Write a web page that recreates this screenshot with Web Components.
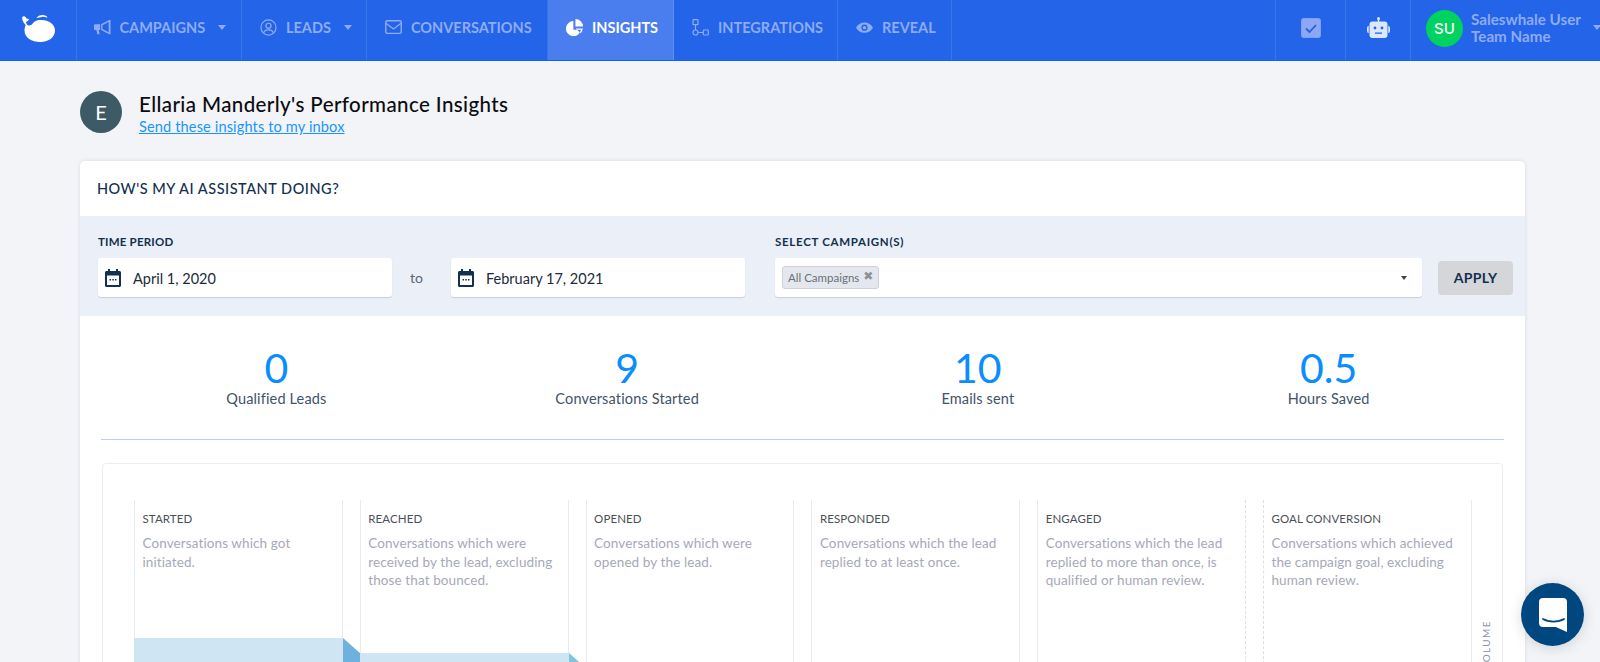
<!DOCTYPE html>
<html lang="en">
<head>
<meta charset="utf-8">
<title>Insights</title>
<style>
  html, body { margin: 0; height: 662px; overflow: hidden; }
  body { background: #f2f4f7; font-family: Lato, "Liberation Sans", sans-serif; color: #12304f; }
</style>
</head>
<body>
<sw-navbar>
  <nav-item style="width:165px;padding-left:16.5px" label="CAMPAIGNS" caret><svg viewBox="0 0 18 16"><path fill="currentColor" fill-rule="evenodd" d="M1 4.500h5.500v6h-1.500l1 4.500h-2.500l-1-4.500h-1.500a1 1 0 0 1-1-1v-4a1 1 0 0 1 1-1zM7.500 4.500l8.500-4.500h1.500v15h-1.500l-8.500-4.500zM9 5.500v4l6.500 3.500v-11z"/></svg></nav-item>
  <nav-item style="width:125px" label="LEADS" caret><svg viewBox="0 0 18 18" fill="none" stroke="currentColor" stroke-width="1.300"><circle cx="9" cy="9" r="8"/><circle cx="9" cy="7.200" r="2.700"/><path d="M3.900 14.600c.6-2 2.600-3.100 5.100-3.100s4.500 1.100 5.100 3.100"/></svg></nav-item>
  <nav-item style="width:181px" label="CONVERSATIONS"><svg viewBox="0 0 18 15" fill="none" stroke="currentColor" stroke-width="1.500"><rect x=".8" y=".8" width="16.400" height="13.400" rx="1.500"/><path d="M1 3.500l8 6 8-6"/></svg></nav-item>
  <nav-item style="width:126px" label="INSIGHTS" active><svg viewBox="0 0 18 18"><path fill="currentColor" d="M7.800 2.200a8 8 0 1 0 8 9.300h-8zM10 0a8 8 0 0 1 8 8h-8zM10.200 10h7.500a8 8 0 0 1-2.100 5.100z"/></svg></nav-item>
  <nav-item style="width:164px" label="INTEGRATIONS"><svg viewBox="0 0 17 17" fill="none" stroke="currentColor" stroke-width="1.200"><rect x="1" y=".7" width="5" height="5" rx=".8"/><path d="M3.500 5.700v5.300M6.300 13.500h5"/><circle cx="3.500" cy="13.500" r="2.500"/><rect x="11.300" y="11" width="5" height="5" rx=".8"/></svg></nav-item>
  <nav-item style="width:114px" label="REVEAL"><svg viewBox="0 0 18 12"><path fill="currentColor" fill-rule="evenodd" d="M9 .5c3.900 0 7.200 2.200 9 5.500-1.800 3.300-5.100 5.500-9 5.500s-7.200-2.200-9-5.500c1.800-3.300 5.100-5.500 9-5.500zm0 2.200a3.300 3.300 0 1 0 0 6.600 3.300 3.300 0 0 0 0-6.600zm0 1.500a1.800 1.800 0 1 1 0 3.600 1.800 1.800 0 0 1 0-3.600z"/></svg></nav-item>
</sw-navbar>

<insights-header name="Ellaria Manderly's Performance Insights" link="Send these insights to my inbox" initial="E"></insights-header>

<insights-card heading="HOW'S MY AI ASSISTANT DOING?">
  <filter-bar></filter-bar>
  <stat-row>
    <stat-item value="0" label="Qualified Leads"></stat-item>
    <stat-item value="9" label="Conversations Started"></stat-item>
    <stat-item value="10" label="Emails sent"></stat-item>
    <stat-item value="0.5" label="Hours Saved"></stat-item>
  </stat-row>
  <funnel-panel>
    <funnel-col title="STARTED" desc="Conversations which got initiated." fill="138" link="#6eb1de"></funnel-col>
    <funnel-col title="REACHED" desc="Conversations which were received by the lead, excluding those that bounced." fill="153" link="#7cc4e0"></funnel-col>
    <funnel-col title="OPENED" desc="Conversations which were opened by the lead."></funnel-col>
    <funnel-col title="RESPONDED" desc="Conversations which the lead replied to at least once."></funnel-col>
    <funnel-col title="ENGAGED" desc="Conversations which the lead replied to more than once, is qualified or human review." dashed="right"></funnel-col>
    <funnel-col title="GOAL CONVERSION" desc="Conversations which achieved the campaign goal, excluding human review." dashed="left"></funnel-col>
  </funnel-panel>
</insights-card>

<chat-launcher></chat-launcher>

<script>
const navItemTemplate = document.createElement("template");
navItemTemplate.innerHTML = /*html*/ `
<style>
  :host {
    display: flex;
    align-items: center;
    box-sizing: border-box;
    height: 60px;
    padding: 0 0 5px 18px;
    border-right: 1px solid #3a74ea;
    color: #8eabf5;
    font: 700 14.5px Lato, "Liberation Sans", sans-serif;
  }
  :host([active]) { background: #4a7dee; color: #fff; border-right-color: #5f8df0; }
  .icon { width: 17px; height: 17px; display: flex; align-items: center; margin-right: 9px; flex: none; }
  ::slotted(svg) { width: 17px; height: auto; display: block; }
  .caret { display: none; width: 0; height: 0; margin-left: 13px; border: 4px solid transparent; border-top: 5px solid #8eabf5; border-bottom: 0; }
  :host([caret]) .caret { display: block; }
</style>
<span class="icon"><slot></slot></span>
<span id="label"></span>
<span class="caret"></span>
`;
class NavItem extends HTMLElement {
  constructor() {
    super();
    this.attachShadow({ mode: "open" });
    this.shadowRoot.appendChild(navItemTemplate.content.cloneNode(true));
    this.shadowRoot.getElementById("label").textContent = this.getAttribute("label");
  }
}
customElements.define("nav-item", NavItem);

const navbarTemplate = document.createElement("template");
navbarTemplate.innerHTML = /*html*/ `
<style>
  :host {
    display: flex;
    height: 61px;
    box-sizing: border-box;
    background: #2364e8;
    border-bottom: 1px solid #0f62f0;
    overflow: hidden;
  }
  .logo { width: 77px; box-sizing: border-box; padding: 15px 0 0 22px; border-right: 1px solid #3a74ea; }
  .right { margin-left: auto; display: flex; }
  .cell { display: flex; align-items: center; justify-content: center; padding-bottom: 5px; box-sizing: border-box; height: 60px; border-left: 1px solid #3a74ea; }
  .user { width: 190px; justify-content: flex-start; padding-left: 15px; gap: 8px; }
  .avatar { width: 37px; height: 37px; margin-top: 1px; border-radius: 50%; background: #00d25f; color: #fff; display: flex; align-items: center; justify-content: center; font: 500 15px Inter, sans-serif; flex: none; }
  .who { color: #8eabf5; font: 700 15.2px/17px Lato, "Liberation Sans", sans-serif; white-space: nowrap; }
  .caret { width: 0; height: 0; margin-left: 4px; border: 4px solid transparent; border-top: 5px solid #8eabf5; border-bottom: 0; flex: none; }
</style>
<div class="logo">
  <svg width="34" height="28" viewBox="0 0 34 28"><path fill="#fff" d="M0 2.500a2 2 0 0 1 3.500-.5l1 1.500 2.500.5c-.3 1.500-1.500 2.500-3 2.700.2 2 1 3.300 2.500 3.800 2 .5 3.500-1 5-3 2-2 4.500-2.500 8-2.500 7.500 0 13.500 4.500 13.500 10.500 0 6.500-6 11.500-14.500 11.500-9 0-16-4.500-16-11.500 0-2 .5-4 1.200-5.500-1-.8-3.400-3.500-3.700-7.500z"/><path fill="#fff" d="M14.500 3c1-2 3.500-3 6-3 2.500 0 4.500 1 5 2.800-2.500-1-4.500-1.300-6-.9-1.500.3-3 .7-5 1.100z"/></svg>
</div>
<div class="right">
  <div class="cell" style="width:70px">
    <svg width="20" height="20" viewBox="0 0 20 20"><rect x=".5" y=".5" width="19" height="19" rx="2" fill="#8aa8f6" stroke="#7f9ff3"/><path d="M5 10.500l3.500 3.500 6.500-7" fill="none" stroke="#2a5fd8" stroke-width="1.800"/></svg>
  </div>
  <div class="cell" style="width:65px">
    <svg width="23" height="21" viewBox="0 0 23 21"><circle cx="11.500" cy="1.500" r="1.500" fill="#dce8ff"/><path fill="#dce8ff" d="M10.800 2h1.400v3h-1.400zM5.500 4.500h12a3 3 0 0 1 3 3v10.500a3 3 0 0 1-3 3h-12a3 3 0 0 1-3-3v-10.500a3 3 0 0 1 3-3zM0 11a2.500 2.500 0 0 1 1.700-2.300v7.600a2.500 2.500 0 0 1-1.700-2.300zM23 11a2.500 2.500 0 0 0-1.700-2.300v7.600a2.500 2.500 0 0 0 1.700-2.300z"/><circle cx="8" cy="11" r="1.400" fill="#2364e8"/><circle cx="15" cy="11" r="1.400" fill="#2364e8"/><rect x="8" y="15.500" width="7" height="1.300" fill="#2364e8"/></svg>
  </div>
  <div class="cell user">
    <div class="avatar">SU</div>
    <div class="who">Saleswhale User<br>Team Name</div>
    <span class="caret"></span>
  </div>
</div>
<slot></slot>
`;
class SwNavbar extends HTMLElement {
  constructor() {
    super();
    this.attachShadow({ mode: "open" });
    this.shadowRoot.appendChild(navbarTemplate.content.cloneNode(true));
    // nav items sit right after the logo, before the right-hand cells
    const right = this.shadowRoot.querySelector(".right");
    this.shadowRoot.insertBefore(this.shadowRoot.querySelector("slot"), right);
  }
}
customElements.define("sw-navbar", SwNavbar);

class InsightsHeader extends HTMLElement {
  constructor() {
    super();
    this.attachShadow({ mode: "open" });
    this.shadowRoot.innerHTML = /*html*/ `
    <style>
      :host { display: flex; align-items: flex-start; box-sizing: border-box; height: 100px; padding: 30px 0 0 80px; gap: 17px; }
      .avatar { width: 42px; height: 42px; border-radius: 50%; background: #3e5a66; color: #fff; display: flex; align-items: center; justify-content: center; font: 400 20px Lato, sans-serif; }
      h1 { margin: 2px 0 0; font: 500 20.5px/22px Lato, sans-serif; color: #0b0b10; letter-spacing: .4px; }
      a { display: block; margin-top: 3px; font: 400 14.6px/17px Lato, sans-serif; color: #1a94ff; text-decoration: underline; letter-spacing: .12px; }
    </style>
    <div class="avatar">${this.getAttribute("initial")}</div>
    <div>
      <h1>${this.getAttribute("name")}</h1>
      <a href="#">${this.getAttribute("link")}</a>
    </div>`;
  }
}
customElements.define("insights-header", InsightsHeader);

class InsightsCard extends HTMLElement {
  constructor() {
    super();
    this.attachShadow({ mode: "open" });
    this.shadowRoot.innerHTML = /*html*/ `
    <style>
      :host { display: block; box-sizing: border-box; width: 1445px; height: 600px; margin-left: 80px; background: #fff; border-radius: 5px 5px 0 0; box-shadow: 0 0 4px rgba(60, 80, 120, 0.14); }
      h2 { margin: 0; height: 55px; box-sizing: border-box; padding: 19px 0 0 17px; font: 500 14.5px/18px Lato, sans-serif; color: #12304f; letter-spacing: .52px; }
    </style>
    <h2>${this.getAttribute("heading")}</h2>
    <slot></slot>`;
  }
}
customElements.define("insights-card", InsightsCard);

const calendarIcon = /*html*/ `<svg width="16" height="18" viewBox="0 0 16 18"><path fill="#12304f" fill-rule="evenodd" d="M3 0h2v2h6v-2h2v2h1.500c.8 0 1.500.7 1.500 1.500v13c0 .8-.7 1.500-1.500 1.500h-13c-.8 0-1.500-.7-1.500-1.500v-13c0-.8.7-1.500 1.500-1.500h1.500zM2 6.500v9.500h12v-9.500z"/><path fill="#12304f" d="M4.500 10h1.500v1.500h-1.500zM7.300 10h1.500v1.500h-1.500zM10 10h1.500v1.500h-1.500z"/></svg>`;

class DateInput extends HTMLElement {
  constructor() {
    super();
    this.attachShadow({ mode: "open" });
    this.shadowRoot.innerHTML = /*html*/ `
    <style>
      :host { display: flex; align-items: center; gap: 12px; box-sizing: border-box; width: 294px; height: 39px; padding-left: 7px; background: #fff; border-radius: 3px; box-shadow: 0 1px 1px rgba(60, 80, 120, 0.2); font: 400 14.5px Lato, sans-serif; color: #1c2b3a; }
      span { padding-top: 2px; }
    </style>
    ${calendarIcon}<span>${this.getAttribute("value")}</span>`;
  }
}
customElements.define("date-input", DateInput);

class FilterBar extends HTMLElement {
  constructor() {
    super();
    this.attachShadow({ mode: "open" });
    this.shadowRoot.innerHTML = /*html*/ `
    <style>
      :host { display: flex; box-sizing: border-box; height: 100px; padding: 18px 11px 0 18px; background: #ebeff7; }
      label { display: block; height: 24px; font: 700 11.5px/15px Lato, sans-serif; color: #12304f; letter-spacing: .2px; }
      .dates { display: flex; align-items: center; }
      .to { box-sizing: border-box; width: 59px; padding-right: 10px; text-align: center; font: 400 14px Lato, sans-serif; color: #5a6672; }
      .campaign { margin-left: 30px; }
      .campaign label { letter-spacing: .7px; }
      .select { display: flex; align-items: center; box-sizing: border-box; width: 647px; height: 39px; padding: 0 15px 0 7px; background: #fff; border-radius: 3px; box-shadow: 0 1px 1px rgba(60, 80, 120, 0.2); }
      .tag { display: flex; gap: 4px; align-items: flex-start; box-sizing: border-box; height: 23px; padding: 3px 5px 0 5px; background: #e4e8ee; border: 1px solid #ccd2da; border-radius: 3px; font: 400 11.5px/16px Lato, sans-serif; color: #6a6f78; }
      .tag b { font: 400 12px/12px "DejaVu Sans", sans-serif; color: #8b9098; }
      .caret { margin-left: auto; width: 0; height: 0; border: 3.5px solid transparent; border-top: 4px solid #3c4450; border-bottom: 0; }
      button { margin: 27px 0 0 16px; height: 34px; width: 75px; padding: 0 0 2px; border: 0; border-radius: 4px; background: #d4d6da; color: #12304f; font: 700 14px Lato, sans-serif; letter-spacing: .3px; }
    </style>
    <div>
      <label>TIME PERIOD</label>
      <div class="dates">
        <date-input value="April 1, 2020"></date-input>
        <span class="to">to</span>
        <date-input value="February 17, 2021"></date-input>
      </div>
    </div>
    <div class="campaign">
      <label>SELECT CAMPAIGN(S)</label>
      <div class="select">
        <span class="tag">All Campaigns <b>✖</b></span>
        <span class="caret"></span>
      </div>
    </div>
    <button>APPLY</button>`;
  }
}
customElements.define("filter-bar", FilterBar);

class StatRow extends HTMLElement {
  constructor() {
    super();
    this.attachShadow({ mode: "open" });
    this.shadowRoot.innerHTML = /*html*/ `
    <style>
      :host { display: grid; grid-template-columns: repeat(4, 1fr); box-sizing: border-box; width: 1403px; height: 124px; margin-left: 21px; padding-top: 30px; border-bottom: 1px solid #bdd0e2; }
    </style>
    <slot></slot>`;
  }
}
customElements.define("stat-row", StatRow);

class StatItem extends HTMLElement {
  constructor() {
    super();
    this.attachShadow({ mode: "open" });
    this.shadowRoot.innerHTML = /*html*/ `
    <style>
      :host { display: block; text-align: center; }
      .value { font: 400 41px/44px Lato, sans-serif; color: #0a8dff; }
      .label { font: 400 14.5px/18px Lato, sans-serif; color: #40536a; letter-spacing: .15px; }
    </style>
    <div class="value">${this.getAttribute("value")}</div>
    <div class="label">${this.getAttribute("label")}</div>`;
  }
}
customElements.define("stat-item", StatItem);

class FunnelPanel extends HTMLElement {
  constructor() {
    super();
    this.attachShadow({ mode: "open" });
    this.shadowRoot.innerHTML = /*html*/ `
    <style>
      :host { display: flex; position: relative; gap: 17px; box-sizing: border-box; width: 1401px; height: 300px; margin: 23px 0 0 22px; padding: 36px 0 0 31px; border: 1px solid #e9edf2; border-radius: 4px; }
      .axis { position: absolute; left: 1377px; top: 156px; writing-mode: vertical-rl; transform: rotate(180deg); font: 400 10px/12px Lato, sans-serif; color: #8d93a8; letter-spacing: 1.4px; }
    </style>
    <slot></slot>
    <span class="axis">VOLUME</span>`;
  }
}
customElements.define("funnel-panel", FunnelPanel);

class FunnelCol extends HTMLElement {
  constructor() {
    super();
    const fill = this.getAttribute("fill");
    const link = this.getAttribute("link");
    this.attachShadow({ mode: "open" });
    this.shadowRoot.innerHTML = /*html*/ `
    <style>
      :host { display: block; position: relative; box-sizing: border-box; flex: 0 0 208.8px; height: 260px; border-left: 1px solid #e6eaf1; border-right: 1px solid #e6eaf1; }
      :host([dashed="right"]) { border-right: 1px dashed #dcdfe5; }
      :host([dashed="left"]) { border-left: 1px dashed #dcdfe5; }
      .text { padding: 11px 8px 0 7.5px; }
      h3 { margin: 0 0 7px; font: 400 11.5px/16px Lato, sans-serif; color: #4b4f57; letter-spacing: .1px; }
      p { margin: 0; font: 400 13.5px/18.7px Lato, sans-serif; color: #a6a9b8; letter-spacing: .1px; }
      .fill { position: absolute; left: -1px; right: -1px; bottom: 0; background: #cfe5f4; }
      svg { position: absolute; top: 0; left: 100%; }
    </style>
    <div class="text">
      <h3>${this.getAttribute("title")}</h3>
      <p>${this.getAttribute("desc")}</p>
    </div>
    ${fill ? `<div class="fill" style="top:${fill}px"><svg width="18" height="40" viewBox="0 0 18 40"><path fill="${link}" d="M0 0l18 16v24h-18z"/></svg></div>` : ""}`;
  }
}
customElements.define("funnel-col", FunnelCol);

class ChatLauncher extends HTMLElement {
  constructor() {
    super();
    this.attachShadow({ mode: "open" });
    this.shadowRoot.innerHTML = /*html*/ `
    <style>
      :host { position: fixed; left: 1521px; top: 583px; width: 63px; height: 63px; border-radius: 50%; background: #00467f; box-shadow: 0 2px 14px rgba(0, 0, 0, 0.14); display: flex; align-items: center; justify-content: center; }
    </style>
    <svg width="28" height="34" viewBox="0 0 28 34"><path fill="#fff" d="M4 0h20a4 4 0 0 1 4 4v30l-11.300-5h-12.700a4 4 0 0 1-4-4v-21a4 4 0 0 1 4-4z"/><path fill="none" stroke="#00467f" stroke-width="1.800" stroke-linecap="round" d="M4 21c5.500 3.500 15.500 3.500 21 0"/></svg>`;
  }
}
customElements.define("chat-launcher", ChatLauncher);
</script>
</body>
</html>
